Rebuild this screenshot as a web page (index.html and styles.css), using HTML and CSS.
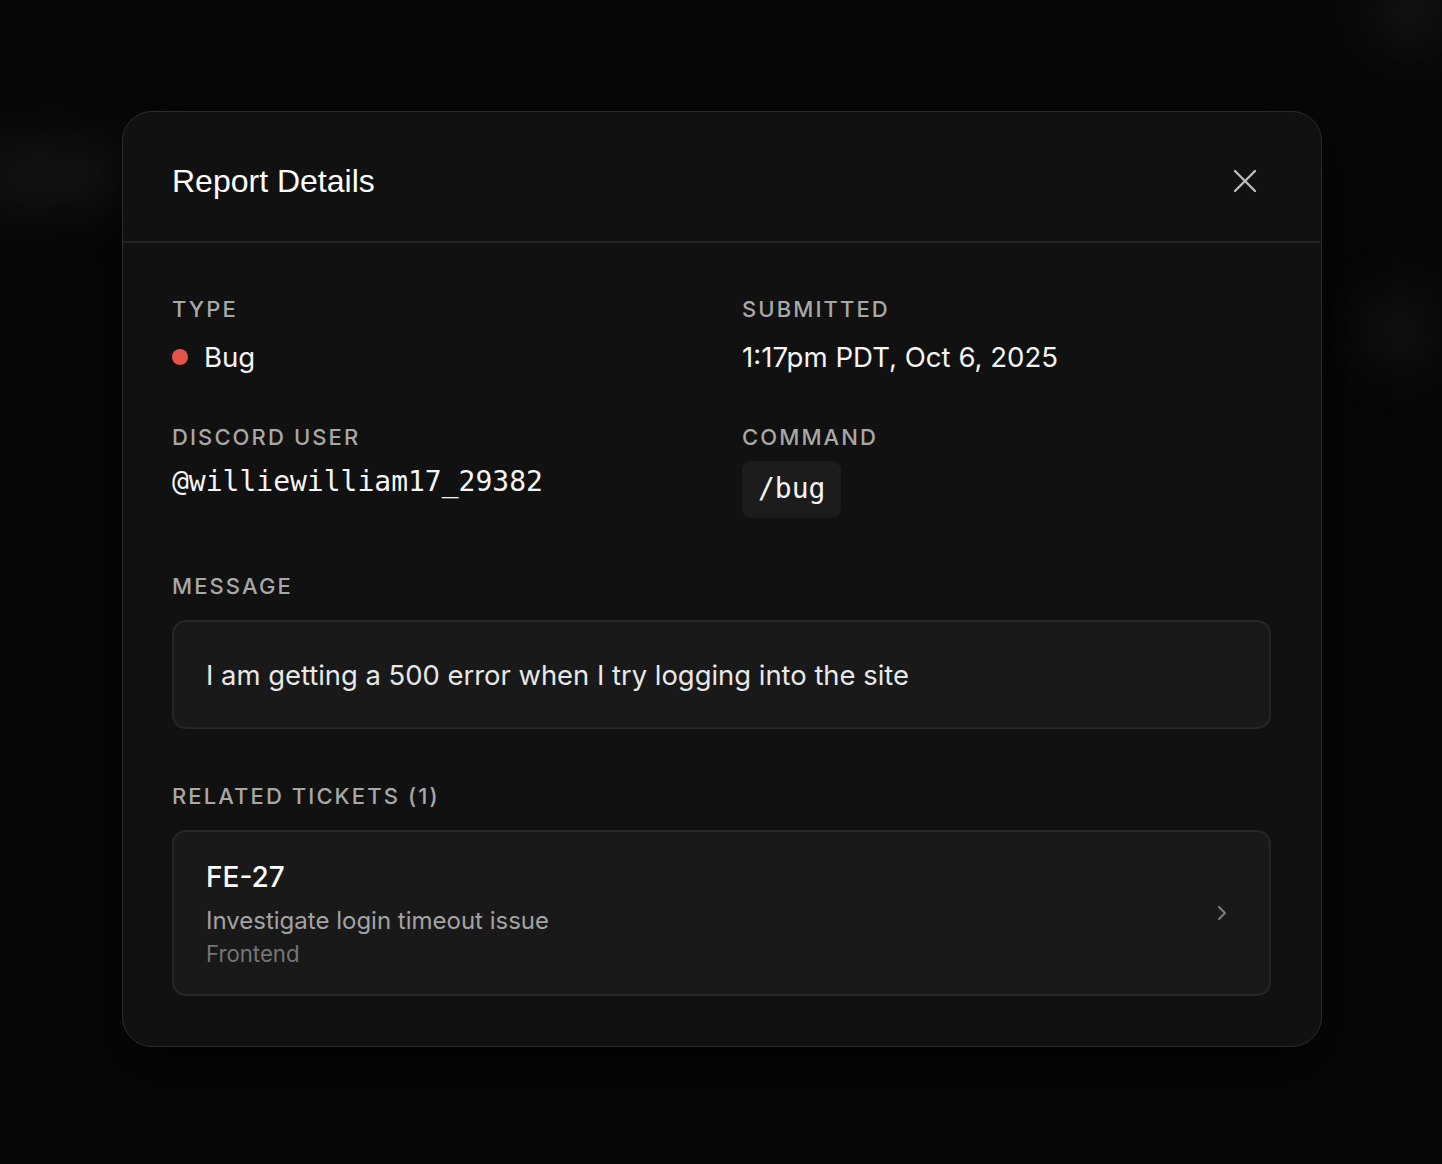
FILE: index.html
```html
<!DOCTYPE html>
<html lang="en">
<head>
<meta charset="utf-8">
<title>Report Details</title>
<link rel="stylesheet" href="styles.css">
</head>
<body>
<div class="backdrop">
  <span class="blob blob-a"></span>
  <span class="blob blob-b"></span>
  <span class="blob blob-c"></span>
</div>
<main class="stage">
  <section class="modal" role="dialog" aria-labelledby="modal-title">
    <header class="modal-header">
      <h1 id="modal-title" class="modal-title">Report Details</h1>
      <button class="close-btn" aria-label="Close">
        <svg width="24" height="24" viewBox="0 0 24 24" fill="none" stroke="currentColor" stroke-width="2.4" stroke-linecap="round"><path d="M2 2L22 22M22 2L2 22"/></svg>
      </button>
    </header>
    <div class="modal-body">
      <div class="field-grid">
        <div class="field">
          <div class="label">TYPE</div>
          <div class="value type-value"><span class="dot"></span>Bug</div>
        </div>
        <div class="field">
          <div class="label">SUBMITTED</div>
          <div class="value">1:17pm PDT, Oct 6, 2025</div>
        </div>
        <div class="field">
          <div class="label">DISCORD USER</div>
          <div class="value mono">@williewilliam17_29382</div>
        </div>
        <div class="field">
          <div class="label">COMMAND</div>
          <div class="value chip-wrap"><code class="chip">/bug</code></div>
        </div>
      </div>

      <div class="section section-message">
        <div class="label">MESSAGE</div>
        <div class="message-box">I am getting a 500 error when I try logging into the site</div>
      </div>

      <div class="section section-tickets">
        <div class="label">RELATED TICKETS (1)</div>
        <a class="ticket" href="#">
          <div class="ticket-info">
            <div class="ticket-id">FE-27</div>
            <div class="ticket-title">Investigate login timeout issue</div>
            <div class="ticket-team">Frontend</div>
          </div>
          <svg class="chevron" width="14" height="20" viewBox="0 0 14 20" fill="none" stroke="currentColor" stroke-width="2.2" stroke-linecap="round" stroke-linejoin="round"><path d="M4 4L10 10L4 16"/></svg>
        </a>
      </div>
    </div>
  </section>
</main>
</body>
</html>
```

FILE: styles.css
```css
* { box-sizing: border-box; }

html, body {
  margin: 0;
  padding: 0;
  height: 100%;
}

body {
  background: #070707;
  font-family: Inter, "Noto Sans", sans-serif;
  color: #f2f2f2;
  overflow: hidden;
  position: relative;
}

.backdrop {
  position: absolute;
  inset: 0;
  pointer-events: none;
}

.blob {
  position: absolute;
  border-radius: 50%;
  background: #2a2a2a;
  filter: blur(28px);
  opacity: 0.6;
}
.blob-a { left: -40px; top: 150px; width: 200px; height: 50px; opacity: 0.5; }
.blob-b { left: 1370px; top: 300px; width: 50px; height: 60px; }
.blob-c { left: 1380px; top: -20px; width: 60px; height: 60px; }

.stage {
  position: relative;
  display: flex;
  justify-content: center;
  padding-top: 111px;
  padding-left: 2px;
}

.modal {
  width: 1200px;
  background: #111111;
  border: 1px solid #2b2b2b;
  border-radius: 30px;
  box-shadow: 0 20px 60px rgba(0, 0, 0, 0.7);
  overflow: hidden;
}

.modal-header {
  display: flex;
  align-items: center;
  justify-content: space-between;
  height: 131px;
  padding: 9px 64px 0 49px;
  border-bottom: 2px solid #232323;
}

.modal-title {
  margin: 0;
  font-family: "Liberation Sans", Arial, sans-serif;
  font-weight: 400;
  font-size: 32px;
  color: #ffffff;
  letter-spacing: 0;
}

.close-btn {
  background: none;
  border: 0;
  padding: 0;
  color: #bdbdbd;
  display: flex;
  cursor: pointer;
}

.modal-body {
  padding: 52px 50px 50px 49px;
}

.field-grid {
  display: grid;
  grid-template-columns: 528px 1fr;
  column-gap: 42px;
  row-gap: 48px;
}

.label {
  font-size: 22px;
  line-height: 28px;
  letter-spacing: 2.1px;
  color: #a8a8a8;
  font-weight: 500;
}

.value {
  margin-top: 16px;
  font-size: 27.6px;
  line-height: 36px;
  color: #f5f5f5;
}

.type-value {
  display: flex;
  align-items: center;
}

.dot {
  width: 16px;
  height: 16px;
  border-radius: 50%;
  background: #e5534b;
  margin-right: 16px;
}

.mono {
  font-family: "DejaVu Sans Mono", "Liberation Mono", monospace;
  font-size: 28px;
  margin-top: 13px;
}

.chip-wrap {
  margin-top: 10px;
}

.chip {
  display: inline-block;
  font-family: "DejaVu Sans Mono", "Liberation Mono", monospace;
  font-size: 28px;
  line-height: 36px;
  padding: 10px 16px 11px;
  background: #1c1c1c;
  border-radius: 9px;
  color: #f5f5f5;
}

.section-message {
  margin-top: 54px;
}

.section-tickets {
  margin-top: 53px;
}

.message-box {
  margin-top: 20px;
  background: #191919;
  border: 2px solid #262626;
  border-radius: 14px;
  padding: 0 32px;
  height: 109px;
  display: flex;
  align-items: center;
  font-size: 27.4px;
  color: #e8e8e8;
}

.ticket {
  margin-top: 20px;
  display: flex;
  align-items: center;
  justify-content: space-between;
  background: #191919;
  border: 2px solid #262626;
  border-radius: 14px;
  padding: 22px 40px 22px 32px;
  text-decoration: none;
  height: 166px;
}

.ticket-id {
  font-size: 28px;
  line-height: 36px;
  font-weight: 500;
  color: #ffffff;
}

.ticket-title {
  margin-top: 10px;
  font-size: 24px;
  line-height: 32px;
  color: #a3a3a3;
}

.ticket-team {
  margin-top: 3px;
  font-size: 22.2px;
  line-height: 28px;
  color: #767676;
}

.chevron {
  color: #7a7a7a;
}
```
